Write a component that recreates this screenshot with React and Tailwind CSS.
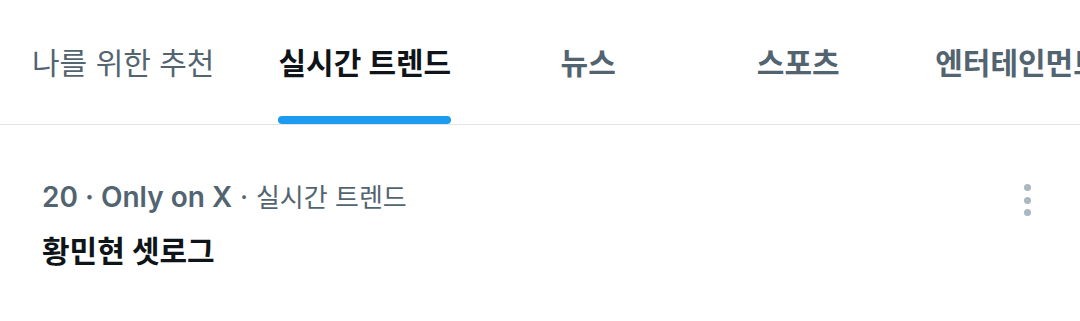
const tabs = [
  { label: "나를 위한 추천", active: false, bold: false },
  { label: "실시간 트렌드", active: true, bold: true },
  { label: "뉴스", active: false, bold: true },
  { label: "스포츠", active: false, bold: true },
  { label: "엔터테인먼트", active: false, bold: true },
];

const App = () => {
  return (
    <div
      className="w-[1080px] h-[321px] overflow-hidden bg-white"
      style={{ fontFamily: 'Inter, "Noto Sans CJK KR", sans-serif' }}
    >
      {/* 탭 */}
      <nav className="h-[125px] border-b border-[#e1e5e8] flex overflow-hidden">
        {tabs.map((tab) => (
          <div
            key={tab.label}
            className="min-w-[210px] shrink-0 px-[32px] flex justify-center"
          >
            <div className="relative h-full flex items-center">
              <span
                className={
                  "text-[30px] leading-none mt-[2px] whitespace-nowrap " +
                  (tab.active ? "text-[#0f1419] " : "text-[#536471] ") +
                  (tab.bold ? "font-bold" : "font-normal")
                }
              >
                {tab.label}
              </span>
              {tab.active && (
                <div className="absolute left-0 right-0 bottom-0 h-[8px] rounded-full bg-[#1d9bf0]" />
              )}
            </div>
          </div>
        ))}
      </nav>

      {/* 트렌드 항목 */}
      <div className="flex justify-between pl-[42px] pr-[49px] pt-[56px]">
        <div className="flex flex-col">
          <div className="text-[28px] leading-[32px] text-[#536471] whitespace-nowrap">
            <span className="font-semibold">20 · Only on X</span>
            <span> · </span>
            <span className="text-[26px]">실시간 트렌드</span>
          </div>
          <div className="mt-[21px] text-[30px] leading-[32px] font-bold text-[#0f1419]">
            황민현 셋로그
          </div>
        </div>
        <div className="flex flex-col gap-[5.5px] pt-[3px]">
          <span className="w-[7px] h-[7px] rounded-full bg-[#aab8c2]" />
          <span className="w-[7px] h-[7px] rounded-full bg-[#aab8c2]" />
          <span className="w-[7px] h-[7px] rounded-full bg-[#aab8c2]" />
        </div>
      </div>
    </div>
  );
};

export default App;
